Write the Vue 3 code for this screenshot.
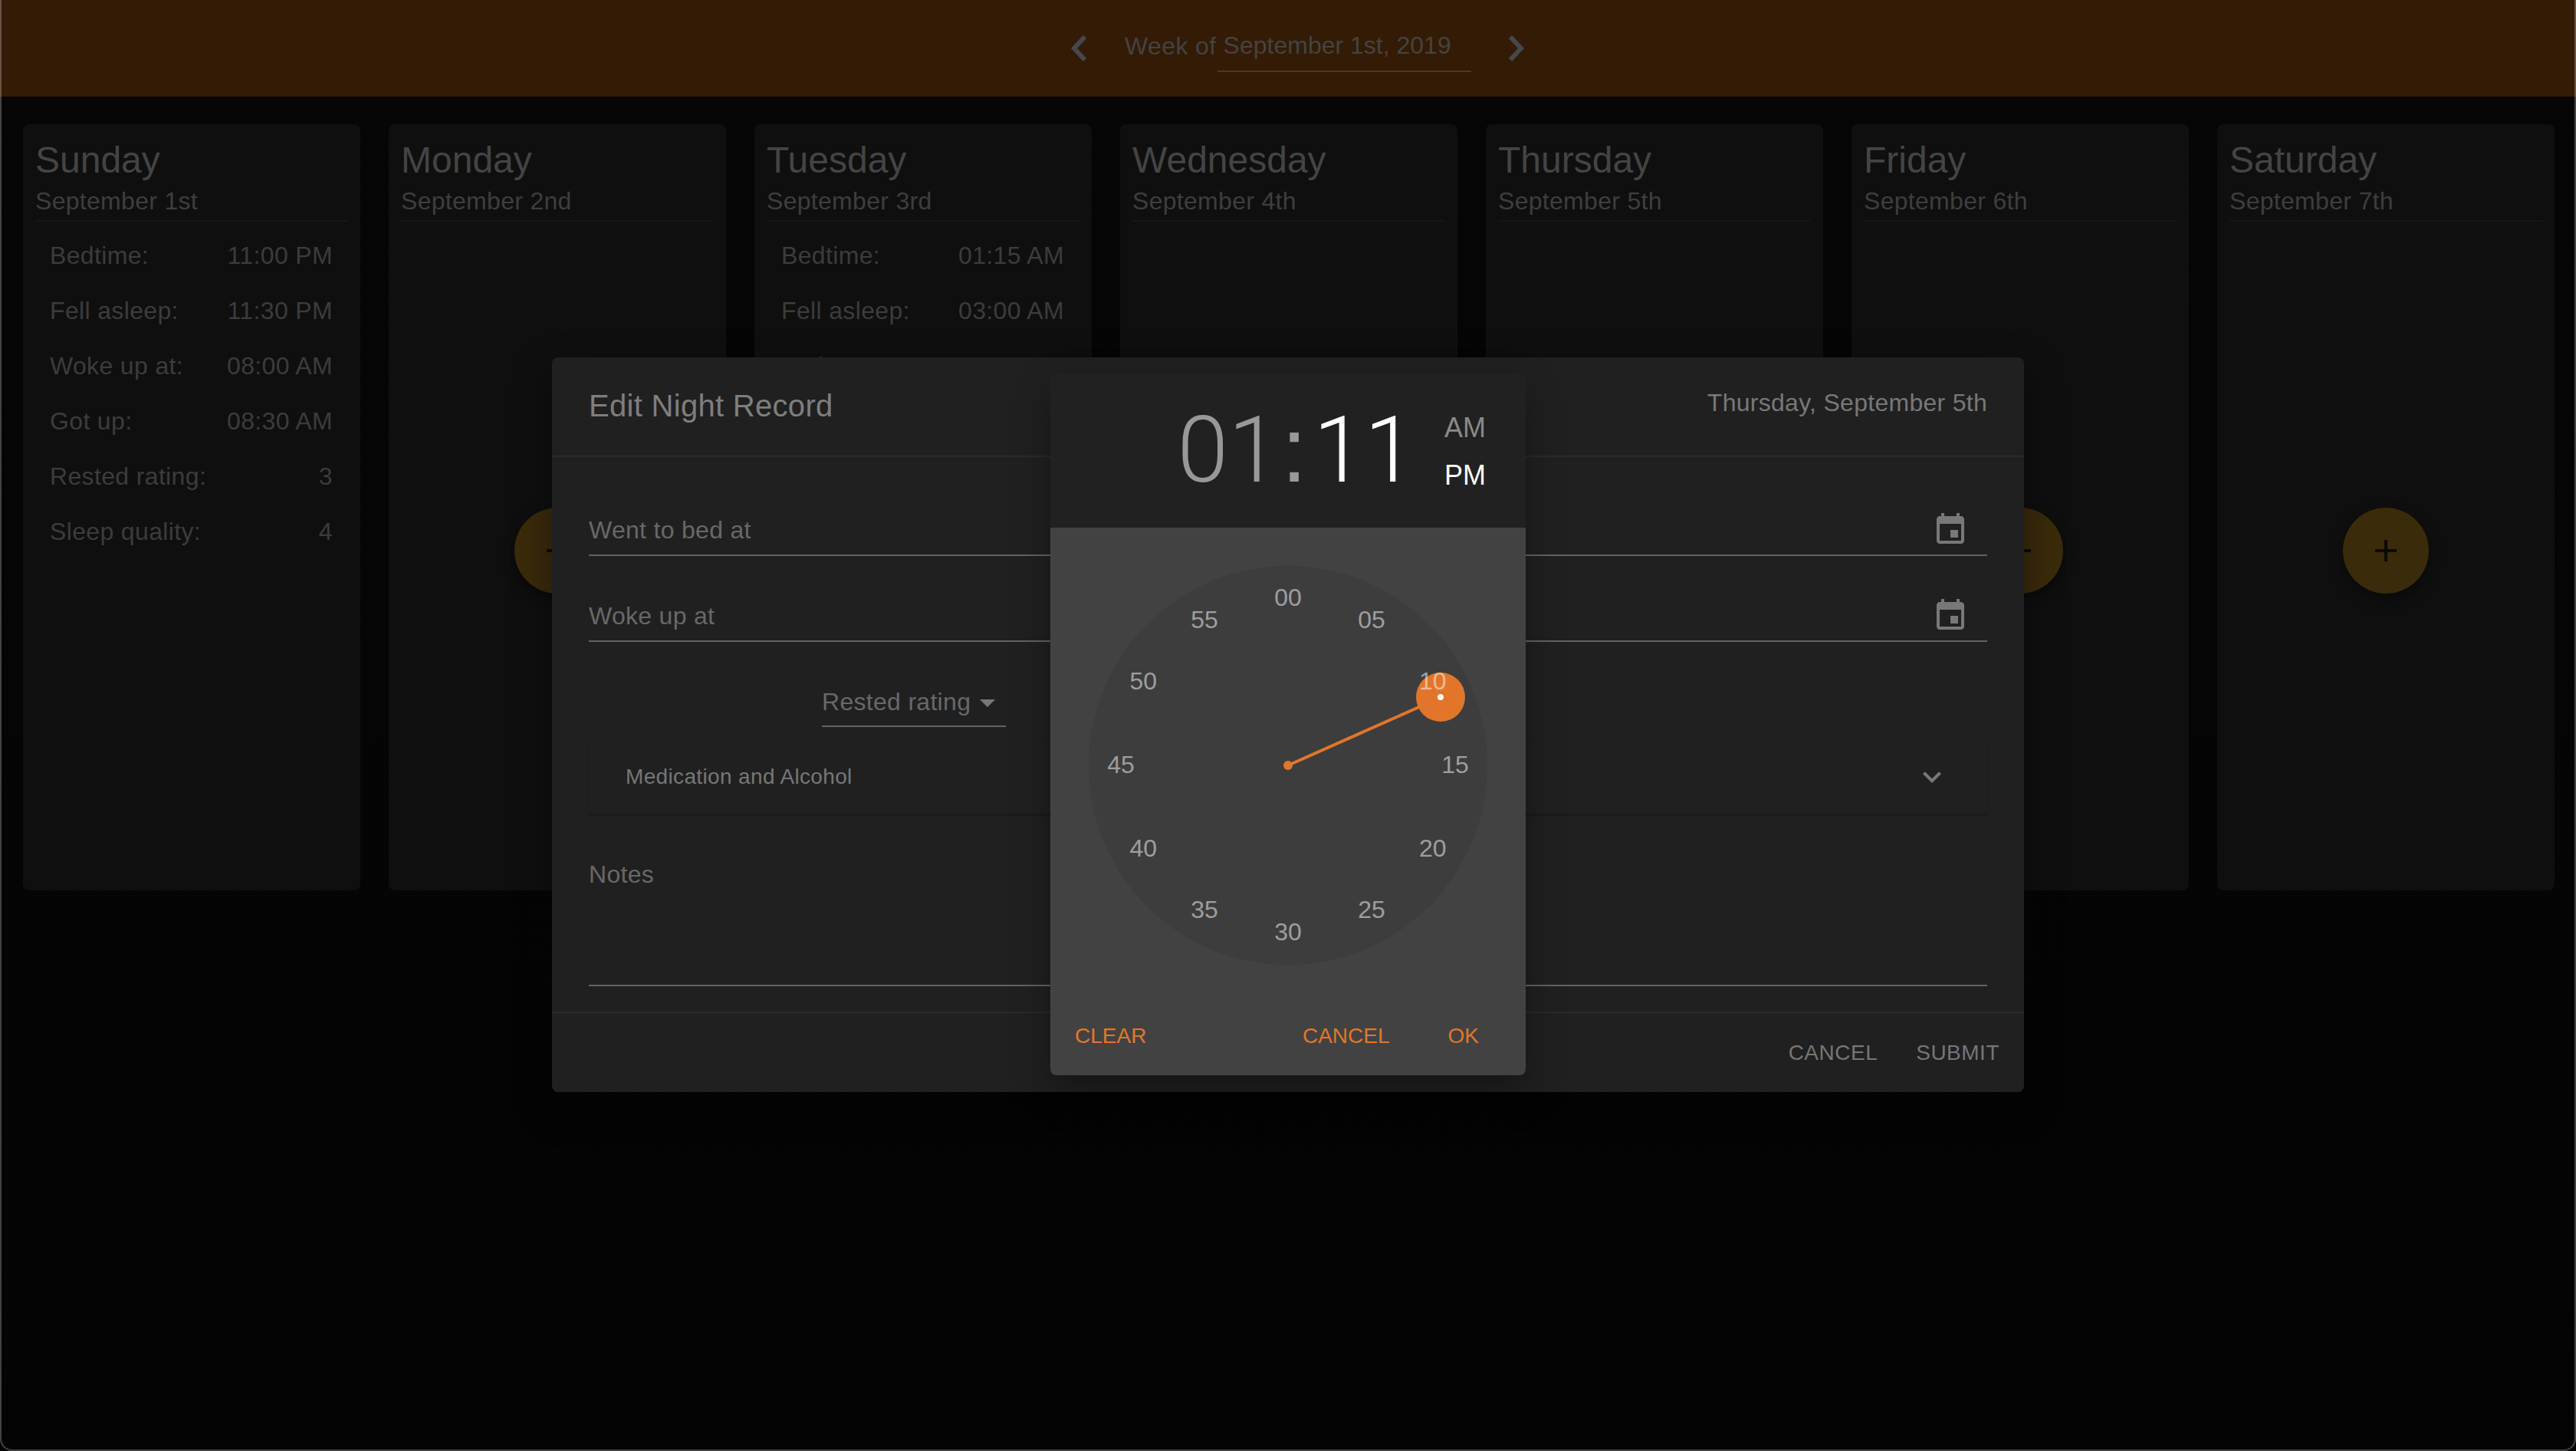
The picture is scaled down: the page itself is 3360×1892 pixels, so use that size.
<script setup>
const days = [
  { name: 'Sunday', date: 'September 1st', rows: [
    ['Bedtime:', '11:00 PM'], ['Fell asleep:', '11:30 PM'], ['Woke up at:', '08:00 AM'],
    ['Got up:', '08:30 AM'], ['Rested rating:', '3'], ['Sleep quality:', '4'],
  ] },
  { name: 'Monday', date: 'September 2nd', rows: [] },
  { name: 'Tuesday', date: 'September 3rd', rows: [
    ['Bedtime:', '01:15 AM'], ['Fell asleep:', '03:00 AM'], ['Woke up at:', '11:00 AM'],
  ] },
  { name: 'Wednesday', date: 'September 4th', rows: [] },
  { name: 'Thursday', date: 'September 5th', rows: [] },
  { name: 'Friday', date: 'September 6th', rows: [] },
  { name: 'Saturday', date: 'September 7th', rows: [] },
];

const minutes = Array.from({ length: 12 }, (_, i) => {
  const angle = (i * 30 * Math.PI) / 180;
  return {
    label: String(i * 5).padStart(2, '0'),
    left: 260 + 218 * Math.sin(angle),
    top: 259 - 218 * Math.cos(angle),
  };
});
</script>

<template>
  <div class="page">
    <header class="topbar">
      <svg class="nav-icon" viewBox="0 0 22 34"><path d="M19 2 5 17l14 15" /></svg>
      <span class="week-label">Week of</span>
      <span class="week-value">September 1st, 2019</span>
      <svg class="nav-icon next" viewBox="0 0 22 34"><path d="M3 2l14 15L3 32" /></svg>
    </header>

    <main class="week">
      <section v-for="day in days" :key="day.name" class="day">
        <h2>{{ day.name }}</h2>
        <p class="date">{{ day.date }}</p>
        <div v-if="day.rows.length" class="rows">
          <div v-for="row in day.rows" :key="row[0]" class="row">
            <span>{{ row[0] }}</span>
            <span>{{ row[1] }}</span>
          </div>
        </div>
        <div v-else class="empty">
          <button class="fab">
            <svg viewBox="0 0 24 24"><path d="M19 13h-6v6h-2v-6H5v-2h6V5h2v6h6v2z" /></svg>
          </button>
        </div>
      </section>
    </main>

    <div class="dialog">
      <div class="dialog-head">
        <span class="dialog-title">Edit Night Record</span>
        <span class="dialog-date">Thursday, September 5th</span>
      </div>
      <div class="dialog-body">
        <div class="field first">
          <span>Went to bed at</span>
          <svg class="cal" viewBox="0 0 24 24"><path d="M17 12h-5v5h5v-5zM16 1v2H8V1H6v2H5c-1.11 0-1.99.9-1.99 2L3 19c0 1.1.89 2 2 2h14c1.1 0 2-.9 2-2V5c0-1.1-.9-2-2-2h-1V1h-2zm3 18H5V8h14v11z" /></svg>
        </div>
        <div class="field">
          <span>Woke up at</span>
          <svg class="cal" viewBox="0 0 24 24"><path d="M17 12h-5v5h5v-5zM16 1v2H8V1H6v2H5c-1.11 0-1.99.9-1.99 2L3 19c0 1.1.89 2 2 2h14c1.1 0 2-.9 2-2V5c0-1.1-.9-2-2-2h-1V1h-2zm3 18H5V8h14v11z" /></svg>
        </div>
        <div class="select">
          <span>Rested rating</span>
          <i class="caret"></i>
        </div>
        <div class="panel">
          <span>Medication and Alcohol</span>
          <svg class="expand" viewBox="0 0 24 24"><path d="M16.59 8.59L12 13.17 7.41 8.59 6 10l6 6 6-6z" /></svg>
        </div>
        <div class="notes">Notes</div>
      </div>
      <div class="dialog-foot">
        <button>Cancel</button>
        <button>Submit</button>
      </div>
    </div>

    <div class="picker">
      <div class="picker-head">
        <div class="time">
          <span class="dim">01</span><span class="dim colon">:</span><span>11</span>
        </div>
        <div class="ampm">
          <span class="dim">AM</span>
          <span>PM</span>
        </div>
      </div>
      <div class="picker-body">
        <div class="clock">
          <div class="hand"></div>
          <div class="hub"></div>
          <div class="knob"><i></i></div>
          <span
            v-for="m in minutes"
            :key="m.label"
            class="tick"
            :style="{ left: m.left + 'px', top: m.top + 'px' }"
          >{{ m.label }}</span>
        </div>
        <div class="picker-actions">
          <button>Clear</button>
          <span class="spacer"></span>
          <button>Cancel</button>
          <button>OK</button>
        </div>
      </div>
    </div>

    <div class="window-edge"></div>
  </div>
</template>

<style>
html, body {
  margin: 0;
  background: #040404;
}
</style>

<style scoped>
.page {
  position: relative;
  width: 3360px;
  height: 1892px;
  overflow: hidden;
  background: linear-gradient(#060606, #040404);
  font-family: "Liberation Sans", Arial, sans-serif;
  color: #444;
}
button {
  border: 0;
  background: none;
  padding: 0;
  font: inherit;
  color: inherit;
  text-transform: uppercase;
}
.window-edge {
  position: absolute;
  inset: 0;
  border: 2px solid rgba(255, 255, 255, 0.25);
  border-top: 0;
  border-radius: 0 0 16px 16px;
  pointer-events: none;
}

.topbar {
  display: flex;
  align-items: flex-start;
  height: 126px;
  background: #341b05;
  color: #434343;
  font-size: 32px;
}
.nav-icon {
  width: 22px;
  height: 34px;
  margin: 46px 0 0 1396px;
  fill: none;
  stroke: #45484c;
  stroke-width: 6;
}
.nav-icon.next {
  margin: 46px 0 0 48px;
}
.week-label {
  margin: 42px 0 0 49px;
  letter-spacing: 0.4px;
}
.week-value {
  width: 331px;
  height: 53px;
  margin: 41px 0 0 1px;
  padding-left: 8px;
  box-sizing: border-box;
  line-height: 36px;
  border-bottom: 2px solid #4a3a2c;
}

.week {
  display: grid;
  grid-template-columns: repeat(7, 440px);
  gap: 37px;
  padding: 36px 0 0 30px;
}
.day {
  display: flex;
  flex-direction: column;
  height: 999px;
  box-sizing: border-box;
  padding: 0 16px;
  background: #0f0f0f;
  border-radius: 8px;
}
h2 {
  margin: 0;
  padding-top: 19px;
  font-size: 48px;
  line-height: 56px;
  font-weight: 400;
  color: #444;
}
.date {
  margin: 0;
  padding-top: 6px;
  height: 52px;
  box-sizing: border-box;
  line-height: 38px;
  font-size: 32px;
  letter-spacing: 0.3px;
  color: #3e3e3e;
  border-bottom: 2px solid #161616;
}
.rows {
  padding: 8px 20px 0 19px;
}
.row {
  display: flex;
  justify-content: space-between;
  height: 72px;
  line-height: 72px;
  font-size: 32px;
  letter-spacing: 0.35px;
  color: #3c3c3c;
}
.empty {
  flex: 1;
  display: flex;
  align-items: center;
  justify-content: center;
  padding-bottom: 14px;
}
.fab {
  display: flex;
  align-items: center;
  justify-content: center;
  width: 112px;
  height: 112px;
  border-radius: 50%;
  background: #3a2b0a;
  box-shadow: 0 6px 16px rgba(0, 0, 0, 0.4);
}
.fab svg {
  width: 48px;
  height: 48px;
  fill: #0a0a08;
}

.dialog {
  position: absolute;
  left: 720px;
  top: 466px;
  display: flex;
  flex-direction: column;
  width: 1920px;
  height: 958px;
  background: #202020;
  border-radius: 8px;
  box-shadow: 0 20px 50px rgba(0, 0, 0, 0.4);
  color: #7e7e7e;
}
.dialog-head {
  display: flex;
  justify-content: space-between;
  height: 130px;
  box-sizing: border-box;
  padding: 0 48px;
  border-bottom: 2px solid #2a2a2a;
}
.dialog-title {
  margin-top: 39px;
  font-size: 40px;
  line-height: 48px;
  letter-spacing: 0.3px;
}
.dialog-date {
  margin-top: 40px;
  font-size: 32px;
  line-height: 38px;
  letter-spacing: 0.28px;
  color: #787878;
}
.dialog-body {
  flex: 1;
  padding: 0 48px;
  color: #686868;
  font-size: 32px;
  letter-spacing: 0.3px;
}
.field {
  display: flex;
  align-items: center;
  justify-content: space-between;
  height: 112px;
  box-sizing: border-box;
  padding-top: 46px;
  padding-right: 24px;
  border-bottom: 2px solid #636363;
}
.field.first {
  height: 129px;
  padding-top: 63px;
}
.cal {
  width: 48px;
  height: 48px;
  fill: #787878;
}
.select {
  display: flex;
  align-items: center;
  gap: 12px;
  width: 240px;
  height: 63px;
  box-sizing: border-box;
  margin: 48px 0 0 304px;
  border-bottom: 2px solid #636363;
}
.caret {
  width: 0;
  height: 0;
  margin-top: 2px;
  border-left: 10px solid transparent;
  border-right: 10px solid transparent;
  border-top: 10px solid #787878;
}
.panel {
  display: flex;
  align-items: center;
  justify-content: space-between;
  height: 96px;
  box-sizing: border-box;
  margin-top: 17px;
  padding: 0 48px;
  font-size: 28px;
  letter-spacing: 0.35px;
  color: #777;
  border-radius: 4px;
  box-shadow: 0 2px 3px rgba(0, 0, 0, 0.25);
}
.expand {
  width: 48px;
  height: 48px;
  fill: #787878;
}
.notes {
  height: 225px;
  box-sizing: border-box;
  padding-top: 60px;
  line-height: 38px;
  border-bottom: 2px solid #636363;
}
.dialog-foot {
  display: flex;
  justify-content: flex-end;
  gap: 50px;
  height: 105px;
  box-sizing: border-box;
  padding: 35px 32px 0 0;
  border-top: 2px solid #2a2a2a;
  font-size: 28px;
  color: #767676;
}
.dialog-foot button {
  height: 34px;
  line-height: 34px;
  letter-spacing: 0.5px;
}

.picker {
  position: absolute;
  left: 1370px;
  top: 487px;
  width: 620px;
  height: 915px;
  display: flex;
  flex-direction: column;
  border-radius: 8px;
  overflow: hidden;
  box-shadow: 0 22px 50px rgba(0, 0, 0, 0.35);
}
.picker-head {
  display: flex;
  align-items: flex-start;
  justify-content: flex-end;
  height: 201px;
  padding-right: 52px;
  background: #212121;
  color: #fff;
}
.time {
  margin: 29px 38px 0 0;
  font-family: Roboto, "Liberation Sans", sans-serif;
  font-weight: 300;
  font-size: 120px;
  line-height: 140px;
}
.colon {
  margin: 0 8px 0 3px;
  font-family: "Liberation Sans", Arial, sans-serif;
  font-weight: 400;
}
.dim {
  color: #989898;
}
.ampm {
  display: flex;
  flex-direction: column;
  align-items: flex-end;
  gap: 21px;
  margin-top: 50px;
  font-size: 36px;
  line-height: 41px;
}
.ampm .dim {
  color: #898989;
}
.picker-body {
  flex: 1;
  display: flex;
  flex-direction: column;
  background: #424242;
}
.clock {
  position: relative;
  width: 520px;
  height: 520px;
  margin: 50px auto 0;
  border-radius: 50%;
  background: #3d3d3d;
}
.hand {
  position: absolute;
  left: 258px;
  bottom: 260px;
  width: 4px;
  height: 218px;
  background: #e1762b;
  transform: rotate(66deg);
  transform-origin: 50% 100%;
}
.hub {
  position: absolute;
  left: 254px;
  top: 254px;
  width: 12px;
  height: 12px;
  border-radius: 50%;
  background: #e1762b;
}
.knob {
  position: absolute;
  left: 427px;
  top: 139px;
  width: 64px;
  height: 64px;
  border-radius: 50%;
  background: #e1762b;
}
.knob i {
  position: absolute;
  left: 28px;
  top: 28px;
  width: 8px;
  height: 8px;
  border-radius: 50%;
  background: #fff;
}
.tick {
  position: absolute;
  font-size: 32px;
  line-height: 36px;
  color: rgba(255, 255, 255, 0.5);
  transform: translate(-50%, -50%);
}
.picker-actions {
  display: flex;
  gap: 76px;
  margin-top: 76px;
  padding: 0 61px 0 32px;
  font-size: 28px;
  line-height: 34px;
  letter-spacing: 1.5px;
  color: #e1762b;
}
.spacer {
  flex: 1;
}
</style>
